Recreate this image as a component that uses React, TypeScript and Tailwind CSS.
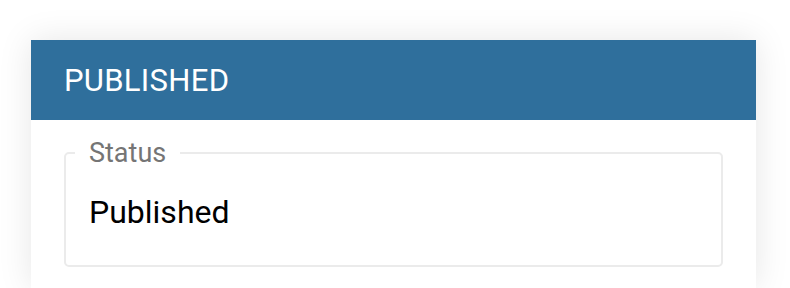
const App = () => {
	return (
		<div className="w-full h-[288px] overflow-hidden bg-white pt-[40px] pl-[31px] font-['Roboto',sans-serif]">
			<div className="w-[725px] bg-white shadow-[0_0_32px_rgba(0,0,0,0.10)]">
				<div className="h-[80px] bg-[#2f6f9c] px-[33px] flex items-center">
					<h1 className="text-[31px] text-white leading-none tracking-[0.3px]">PUBLISHED</h1>
				</div>
				<div className="px-[33px] pt-[18px] pb-[21px]">
					<fieldset className="border-2 border-[#ebebeb] rounded-[5px] pl-[9px] pr-4 pb-[35px]">
						<legend className="px-[14px] text-[27px] leading-[30px] text-[#757575]">Status</legend>
						<p className="pl-[14px] pt-[26px] text-[32px] leading-[36px] text-black">Published</p>
					</fieldset>
				</div>
			</div>
		</div>
	)
}

export default App
